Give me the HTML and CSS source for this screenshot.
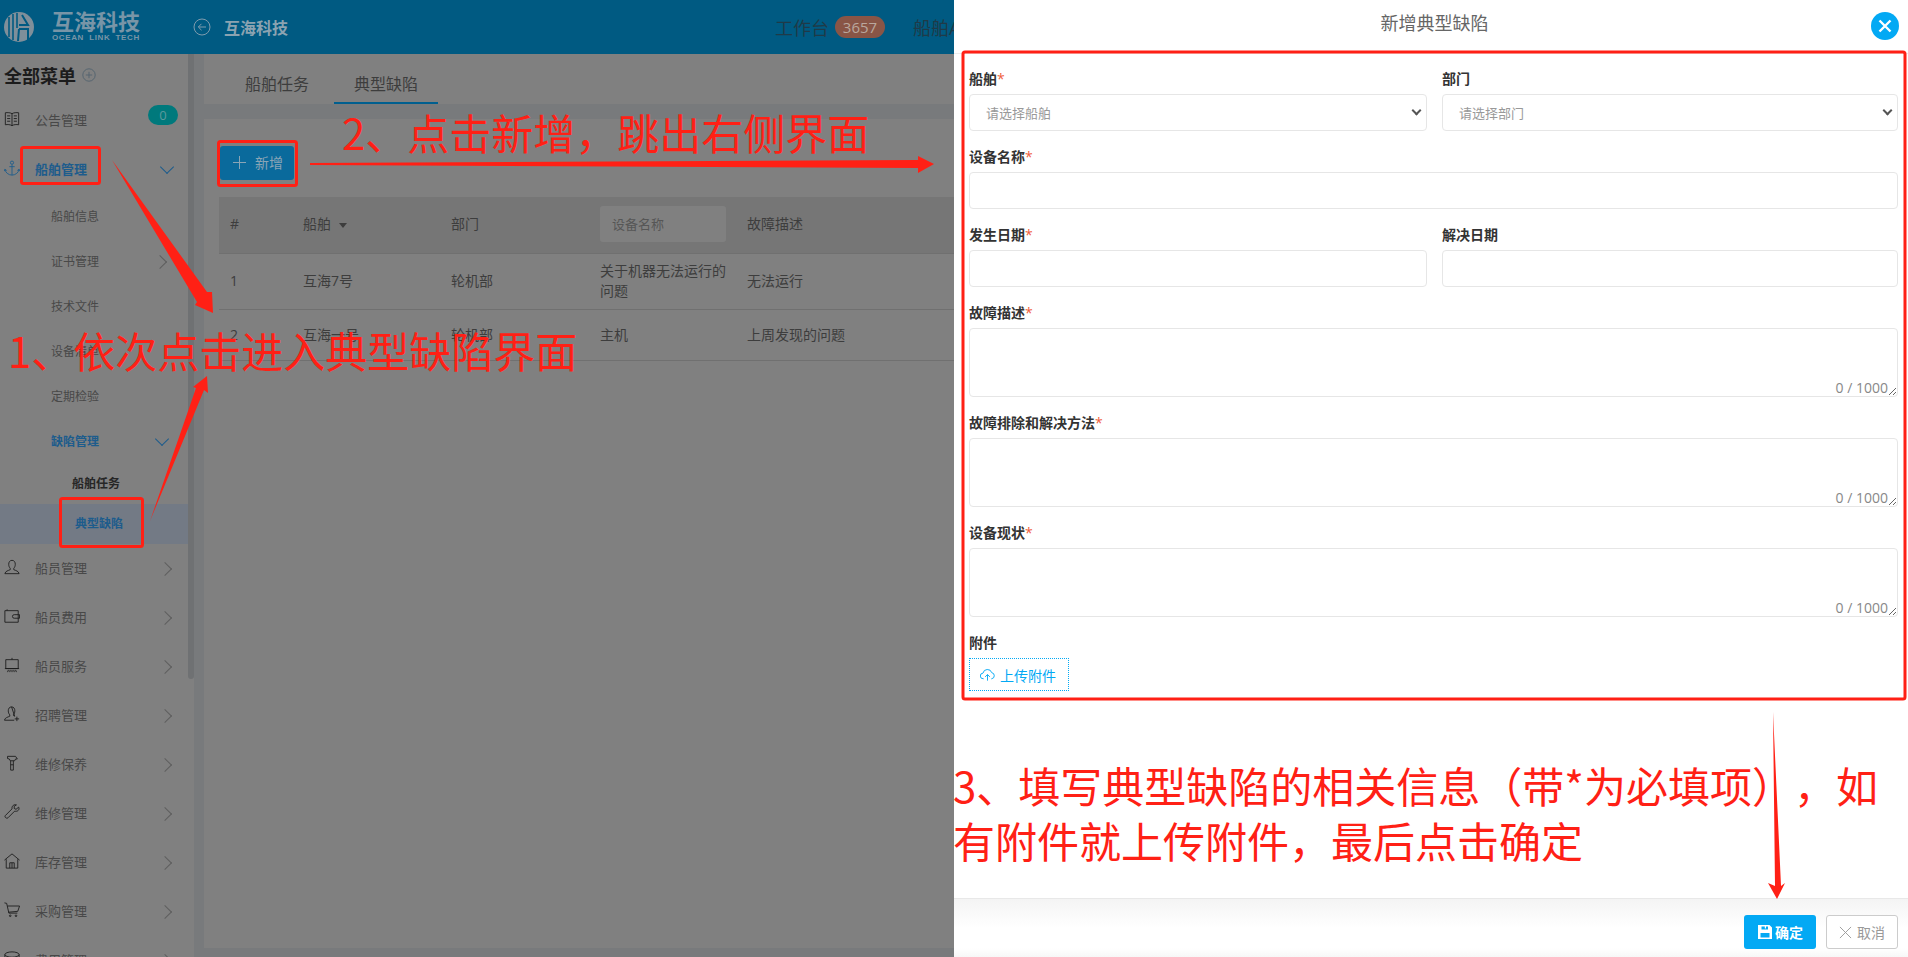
FILE: index.html
```html
<!DOCTYPE html>
<html>
  <head>
    <meta name="viewport" content="width=device-width, initial-scale=1.0">
    <title>互海科技</title>
    <link rel="stylesheet" href="styles.css">
  </head>
  <body>
    <!-- Dimmed application behind the drawer -->
    <div class="app">
      <div class="header">
        <svg class="logo" viewBox="0 0 30 30">
          <circle cx="15" cy="15" r="15" fill="#7f8f9a"/>
          <path d="M5 5v20M9 2v26M13 1v15" stroke="#005a82" stroke-width="1.600" fill="none"/>
          <path d="M15 13h9l-6 -10M15 17l-1 12M15 17h9v11" stroke="#005a82" stroke-width="2" fill="none"/>
        </svg>
        <div class="brand">
          <div class="brand-name">互海科技</div>
          <div class="brand-sub">OCEAN LINK TECH</div>
        </div>
        <svg class="back" viewBox="0 0 18 18">
          <circle cx="9" cy="9" r="8"/>
          <path d="M13 9H5.500M8.500 5.800 5.300 9l3.200 3.200"/>
        </svg>
        <div class="company">互海科技</div>
        <div class="nav">
          <span class="nav-item">工作台</span>
          <span class="nav-badge">3657</span>
          <span class="nav-item nav-next">船舶AIS</span>
        </div>
      </div>

      <div class="main">
        <div class="sidebar">
          <div class="menu-title">全部菜单
            <svg class="menu-plus" viewBox="0 0 14 14"><circle cx="7" cy="7" r="6.200"/><path d="M7 3.800v6.400M3.800 7h6.400"/></svg>
          </div>
          <div class="item">
            <svg class="ico" viewBox="0 0 18 18"><path d="M9 3C7 1.800 4 1.600 1.500 2V15.500C4 15 7 15.200 9 16.500 11 15.200 14 15 16.500 15.500V2C14 1.600 11 1.800 9 3V16.500M3.500 5.500h3.500M3.500 8.500h3.500M3.500 11.500h3.500M11 5.500h3.500M11 8.500h3.500M11 11.500h3.500"/></svg>
            <span>公告管理</span>
            <span class="count">0</span>
          </div>
          <div class="item item-open">
            <svg class="ico ico-blue" viewBox="0 0 18 18"><circle cx="9" cy="3" r="1.800"/><path d="M9 5v12M6 7.500h6M1 10.500C1.500 14 5 17 9 17s7.500-3 8-6.500M1 10.500l-.5 2M1 10.500l2 1.300M17 10.500l.5 2M17 10.500l-2 1.300"/></svg>
            <span>船舶管理</span>
            <i class="chev chev-down"></i>
          </div>
          <div class="sub">船舶信息</div>
          <div class="sub">证书管理<i class="chev chev-sub"></i></div>
          <div class="sub">技术文件</div>
          <div class="sub">设备清单</div>
          <div class="sub">定期检验</div>
          <div class="sub sub-open">缺陷管理<i class="chev chev-down chev-sub"></i></div>
          <div class="leaf">船舶任务</div>
          <div class="leaf leaf-active">典型缺陷</div>
          <div class="item">
            <svg class="ico" viewBox="0 0 18 18"><path d="M9 1.500C6.500 1.500 5.300 3.500 5.300 6c0 2 .8 3.500 1.700 4.500V12C5 13 1.500 13.500 1 16.500h16C16.500 13.500 13 13 11 12v-1.500c.9-1 1.700-2.500 1.700-4.500 0-2.500-1.200-4.500-3.700-4.500Z"/></svg>
            <span>船员管理</span>
            <i class="chev"></i>
          </div>
          <div class="item">
            <svg class="ico" viewBox="0 0 18 18"><path d="M1 3h15v13H1ZM16 7.500h-4.500a2 2 0 0 0 0 4H17.500V7.500H16M3.500 3V1.500"/></svg>
            <span>船员费用</span>
            <i class="chev"></i>
          </div>
          <div class="item">
            <svg class="ico" viewBox="0 0 18 18"><path d="M2 3h14v10H2ZM1 13h16M9 3V1M5 14.500 4 17M9 14.500V17M13 14.500l1 2.500M7 14.500 6.500 17M11 14.500l.5 2.500"/></svg>
            <span>船员服务</span>
            <i class="chev"></i>
          </div>
          <div class="item">
            <svg class="ico" viewBox="0 0 18 18"><path d="M8.500 1C6 1 4.800 3 4.800 5.500c0 2 .8 3.500 1.700 4.500v1.500C4.500 12.500 1 13 .5 16h11M12 11.500c-.7-.2-1.500-.6-1.500-1.500 .9-1 1.700-2.500 1.700-4.500C12.200 3 11 1 8.500 1ZM14.500 12v5M12 14.500h5"/></svg>
            <span>招聘管理</span>
            <i class="chev"></i>
          </div>
          <div class="item">
            <svg class="ico" viewBox="0 0 18 18"><path d="M4 1.500h9l2 3H13l-1 2H7L6 4.500 4 4ZM7.500 6.500V17h3V6.500M7.500 11h3"/></svg>
            <span>维修保养</span>
            <i class="chev"></i>
          </div>
          <div class="item">
            <svg class="ico" viewBox="0 0 18 18"><path d="M16.500 3.500 13.500 6 11.500 5 11.500 2.500 14 1C11.500 0 8.500 2 9 5.500L1.500 13c-1.500 1.500 1.500 4 3 2.500L12 8c3 1 6-1.500 4.500-4.500Z"/></svg>
            <span>维修管理</span>
            <i class="chev"></i>
          </div>
          <div class="item">
            <svg class="ico" viewBox="0 0 18 18"><path d="M.5 8 9 1l8.500 7M2.500 7v10h13V7M6.500 17v-6h5v6M9 11v6"/></svg>
            <span>库存管理</span>
            <i class="chev"></i>
          </div>
          <div class="item">
            <svg class="ico" viewBox="0 0 18 18"><path d="M.5 1 3 1.500 5.500 12.500h9.500M4 4.500h13.500L15.500 10.500l-10.500 1"/><circle cx="7" cy="15.500" r=".9"/><circle cx="13.500" cy="15.500" r=".9"/></svg>
            <span>采购管理</span>
            <i class="chev"></i>
          </div>
          <div class="item">
            <svg class="ico" viewBox="0 0 18 18"><ellipse cx="9" cy="4" rx="8" ry="3"/><path d="M1 4v10c0 1.500 3.500 3 8 3s8-1.500 8-3V4"/></svg>
            <span>费用管理</span>
            <i class="chev"></i>
          </div>
        </div>
        <div class="scrollbar"><div class="thumb"></div></div>

        <div class="content">
          <div class="tabs">
            <div class="tab">船舶任务</div>
            <div class="tab tab-active">典型缺陷</div>
          </div>
          <div class="card">
            <div class="add">
              <svg class="add-plus" viewBox="0 0 13 13"><path d="M6.500 0v13M0 6.500h13"/></svg>
              新增
            </div>
            <table class="grid">
              <colgroup>
                <col class="c1"><col class="c2"><col class="c3"><col class="c4"><col class="c5">
              </colgroup>
              <tr class="grid-head">
                <th>#</th>
                <th>船舶<i class="caret"></i></th>
                <th>部门</th>
                <th><input class="grid-input" placeholder="设备名称"></th>
                <th>故障描述</th>
              </tr>
              <tr>
                <td>1</td><td>互海7号</td><td>轮机部</td><td>关于机器无法运行的问题</td><td>无法运行</td>
              </tr>
              <tr class="row-low">
                <td>2</td><td>互海一号</td><td>轮机部</td><td>主机</td><td>上周发现的问题</td>
              </tr>
            </table>
          </div>
        </div>
      </div>
    </div>

    <!-- Drawer -->
    <div class="drawer">
      <div class="drawer-head">新增典型缺陷
        <svg class="close" viewBox="0 0 28 28"><circle cx="14" cy="14" r="14"/><path d="M8.500 8.500l11 11M19.500 8.500l-11 11"/></svg>
      </div>
      <div class="form">
        <div class="field">
          <label>船舶<b>*</b></label>
          <div class="pick"><select><option>请选择船舶</option></select></div>
        </div>
        <div class="field">
          <label>部门</label>
          <div class="pick"><select><option>请选择部门</option></select></div>
        </div>
        <div class="field wide">
          <label>设备名称<b>*</b></label>
          <input>
        </div>
        <div class="field">
          <label>发生日期<b>*</b></label>
          <input>
        </div>
        <div class="field">
          <label>解决日期</label>
          <input>
        </div>
        <div class="field wide">
          <label>故障描述<b>*</b></label>
          <div class="area"><textarea></textarea><span class="counter">0 / 1000</span></div>
        </div>
        <div class="field wide">
          <label>故障排除和解决方法<b>*</b></label>
          <div class="area"><textarea></textarea><span class="counter">0 / 1000</span></div>
        </div>
        <div class="field wide">
          <label>设备现状<b>*</b></label>
          <div class="area"><textarea></textarea><span class="counter">0 / 1000</span></div>
        </div>
        <div class="field wide">
          <label>附件</label>
          <div class="upload">
            <svg viewBox="0 0 16 14"><path d="M4 11H3.500a3 3 0 0 1-.3-6A4.800 4.800 0 0 1 12.500 4.500 3.300 3.300 0 0 1 12.500 11H12M8 13V6.500M5.500 9 8 6.500 10.500 9"/></svg>
            上传附件
          </div>
        </div>
      </div>
      <div class="drawer-foot">
        <div class="btn btn-ok">
          <svg viewBox="0 0 16 16"><path fill-rule="evenodd" d="M1 1h11.500L15 3.500V15H1ZM4.500 2.500v3h6.500v-3h-2v2h-1.200v-2ZM3.500 9v4.500h9V9Z"/></svg>
          确定
        </div>
        <div class="btn btn-cancel">
          <svg viewBox="0 0 14 14"><path d="M1 1l12 12M13 1 1 13"/></svg>
          取消
        </div>
      </div>
    </div>

    <!-- Red annotations drawn on top of the screenshot -->
    <svg class="marks" viewBox="0 0 1908 957">
      <rect x="21.500" y="147.500" width="78" height="36" rx="2"/>
      <rect x="60.500" y="498.500" width="82" height="48" rx="2"/>
      <rect x="218.500" y="141.500" width="78" height="44" rx="2"/>
      <rect x="963" y="52" width="942" height="647" rx="2"/>
      <path class="arrow" d="M112 160 207 292 212 292 213 313 195 305 197 302Z"/>
      <path class="arrow" d="M150 521 196 388 193 387 207 376 208 393 204 390Z"/>
      <path class="arrow" d="M310 163 918 160V156L934 164 918 173V168L310 165Z"/>
      <path class="arrow" d="M1773 712 1775 886 1768 883 1777 899 1785 883 1781 886Z"/>
    </svg>
    <div class="note note-1">1、依次点击进入典型缺陷界面</div>
    <div class="note note-2">2、点击新增，跳出右侧界面</div>
    <div class="note note-3">3、填写典型缺陷的相关信息（带*为必填项），如<br>有附件就上传附件，最后点击确定</div>
  </body>
</html>
```

FILE: styles.css
```css
body {
  margin: 0px;
  height: 957px;
  overflow: hidden;
  position: relative;
  font-family: "Open Sans", "Noto Sans CJK SC", sans-serif;
  font-size: 14px;
  background-color: #808080;
}

.app {
  height: 957px;
  width: 954px;
  overflow: hidden;
}

/* Header */

.header {
  display: flex;
  align-items: center;
  height: 54px;
  background-color: #005a82;
  white-space: nowrap;
}

.header > * {
  flex-shrink: 0;
}

.logo {
  width: 30px;
  height: 30px;
  margin-left: 4px;
}

.brand {
  margin-left: 18px;
  width: 87px;
  color: #7895a7;
}

.brand-name {
  font-size: 22px;
  font-weight: bold;
  line-height: 24px;
  margin-top: -2px;
}

.brand-sub {
  font-family: "Liberation Sans", sans-serif;
  font-size: 8px;
  font-weight: bold;
  line-height: 10px;
  letter-spacing: 0.600px;
  word-spacing: 2.500px;
}

.back {
  width: 18px;
  height: 18px;
  margin-left: 54px;
  fill: none;
  stroke: #7f9cae;
  stroke-width: 1;
}

.company {
  margin-left: 13px;
  font-size: 16px;
  font-weight: bold;
  color: #8ba3b1;
}

.nav {
  display: flex;
  align-items: center;
  margin-left: 487px;
}

.nav-item {
  font-size: 18px;
  color: #1f3a48;
}

.nav-next {
  margin-left: 28px;
}

.nav-badge {
  margin-left: 6px;
  width: 50px;
  height: 22px;
  line-height: 22px;
  border-radius: 11px;
  background-color: #895546;
  color: #b9a79d;
  font-size: 15px;
  text-align: center;
}

/* Sidebar */

.main {
  display: flex;
  height: 903px;
}

.sidebar {
  width: 188px;
  flex-shrink: 0;
  overflow: hidden;
  color: #484848;
  font-size: 13px;
}

.menu-title {
  display: flex;
  align-items: center;
  height: 42px;
  padding-left: 4px;
  font-size: 18px;
  font-weight: bold;
  color: #1c1c1c;
}

.menu-plus {
  width: 14px;
  height: 14px;
  margin-left: 6px;
  fill: none;
  stroke: #566570;
  stroke-width: 1;
}

.item {
  display: flex;
  align-items: center;
  box-sizing: border-box;
  height: 49px;
  padding: 0px 0px 3px 4px;
  position: relative;
}

.item span:first-of-type {
  margin-left: 15px;
}

.ico {
  width: 16px;
  height: 16px;
  flex-shrink: 0;
  fill: none;
  stroke: #1c1c1c;
  stroke-width: 1;
}

.ico-blue {
  stroke: #1d5c8c;
}

.item-open,
.sub-open {
  color: #1d5c8c;
  font-weight: bold;
}

.count {
  position: absolute;
  left: 148px;
  top: 9px;
  width: 30px;
  height: 20px;
  line-height: 20px;
  border-radius: 10px;
  background-color: #00797c;
  color: #5b9a9c;
  font-size: 13px;
  text-align: center;
}

.chev {
  position: absolute;
  left: 160px;
  top: 50%;
  width: 9px;
  height: 9px;
  margin-top: -5px;
  border-top: 1px solid #5e5e5e;
  border-right: 1px solid #5e5e5e;
  transform: rotate(45deg);
}

.chev-down {
  left: 162px;
  margin-top: -8px;
  border-color: #1d5c8c;
  transform: rotate(135deg);
}

.sub {
  position: relative;
  height: 45px;
  line-height: 45px;
  padding-left: 51px;
  font-size: 12px;
}

.chev-sub {
  left: 155px;
}

.chev-down.chev-sub {
  left: 157px;
}

.leaf {
  height: 40px;
  line-height: 40px;
  padding-left: 72px;
  font-size: 12px;
  font-weight: bold;
  color: #262626;
}

.leaf-active {
  padding-left: 75px;
  background-color: #737a85;
  color: #1d5c8c;
}

.scrollbar {
  width: 6px;
  flex-shrink: 0;
}

.thumb {
  height: 625px;
  background-color: #6f7173;
  border-radius: 0px 0px 3px 3px;
}

/* Page content */

.content {
  flex-grow: 1;
  margin-left: 10px;
  position: relative;
  box-shadow: -10px 0px 0px #787a7c;
  background-color: #787a7c;
  padding-bottom: 9px;
  display: flex;
  flex-direction: column;
}

.tabs {
  display: flex;
  height: 50px;
  padding-left: 21px;
  background-color: #808080;
}

.tab {
  padding: 0px 20px;
  width: 64px;
  line-height: 60px;
  margin-right: 5px;
  font-size: 16px;
  color: #3d3d3d;
}

.tab-active {
  height: 48px;
  border-bottom: 2px solid #005f8f;
}

.card {
  flex-grow: 1;
  margin-top: 15px;
  padding: 27px 0px 0px 15px;
  background-color: #808080;
}

.add {
  display: flex;
  align-items: center;
  width: 74px;
  height: 34px;
  margin-left: 1px;
  padding-bottom: 2px;
  box-sizing: border-box;
  border-radius: 3px;
  background-color: #0a6a9c;
  color: #8aa5b6;
  font-size: 14px;
}

.add-plus {
  width: 13px;
  height: 13px;
  margin-left: 13px;
  margin-right: 9px;
  stroke: #8aa5b6;
  stroke-width: 1;
}

.grid {
  width: 735px;
  margin-top: 17px;
  border-collapse: collapse;
  table-layout: fixed;
  color: #3d3d3d;
}

.c1 { width: 73px; }
.c2 { width: 148px; }
.c3 { width: 149px; }
.c4 { width: 147px; }

.grid th,
.grid td {
  padding: 0px 10px 0px 11px;
  text-align: left;
  font-weight: normal;
  line-height: 20px;
}

.grid th {
  padding-bottom: 2px;
}

.grid-head {
  height: 56px;
  background-color: #767676;
}

.grid tr {
  height: 56px;
  border-bottom: 1px solid #707070;
}

.grid tr.row-low {
  height: 51px;
}

.caret {
  display: inline-block;
  margin-left: 8px;
  vertical-align: middle;
  border-left: 4px solid transparent;
  border-right: 4px solid transparent;
  border-top: 5px solid #3d3d3d;
}

.grid-input {
  display: block;
  box-sizing: border-box;
  width: 126px;
  height: 36px;
  padding: 0px 12px;
  border: none;
  border-radius: 3px;
  background-color: #808080;
  font: 13px "Noto Sans CJK SC", sans-serif;
}

.grid-input::placeholder {
  color: #565656;
}

/* Drawer */

.drawer {
  position: absolute;
  left: 954px;
  top: 0px;
  width: 954px;
  height: 957px;
  display: flex;
  flex-direction: column;
  background-color: white;
}

.drawer-head {
  position: relative;
  box-sizing: border-box;
  height: 54px;
  padding-left: 7px;
  line-height: 46px;
  flex-shrink: 0;
  border-bottom: 1px solid #eeeeee;
  font-size: 18px;
  color: #666666;
  text-align: center;
}

.close {
  position: absolute;
  right: 9px;
  top: 12px;
  width: 28px;
  height: 28px;
  fill: #03a9f4;
  stroke: white;
  stroke-width: 2.400;
}

.close circle {
  stroke: none;
}

.form {
  display: grid;
  grid-template-columns: 458px 456px;
  column-gap: 15px;
  row-gap: 13px;
  padding: 12px 10px 0px 15px;
}

.field label {
  display: block;
  height: 26px;
  line-height: 25px;
  margin-bottom: 2px;
  font-size: 14px;
  font-weight: bold;
  color: #333333;
}

.field b {
  font-weight: normal;
  color: #f0603c;
}

.wide {
  grid-column: 1 / 3;
}

.field input,
.field select,
.field textarea {
  display: block;
  box-sizing: border-box;
  width: 100%;
  height: 37px;
  padding: 0px 12px;
  border: 1px solid #e6e6e6;
  border-radius: 4px;
  background-color: white;
  font: 13px "Noto Sans CJK SC", sans-serif;
  color: #999999;
}

.field select {
  padding-left: 16px;
  appearance: none;
}

.pick {
  position: relative;
}

.pick::after {
  content: "";
  position: absolute;
  right: 7px;
  top: 13px;
  width: 5px;
  height: 5px;
  border-right: 2px solid #555555;
  border-bottom: 2px solid #555555;
  transform: rotate(45deg);
}

.area {
  position: relative;
}

.field textarea {
  height: 69px;
  padding-top: 8px;
  resize: vertical;
}

.counter {
  position: absolute;
  right: 10px;
  bottom: 0px;
  line-height: 18px;
  font-size: 14px;
  color: #888888;
}

.upload {
  display: flex;
  align-items: center;
  box-sizing: border-box;
  width: 100px;
  height: 33px;
  padding-left: 10px;
  border: 1px dotted #03a9f4;
  color: #03a9f4;
  font-size: 14px;
}

.upload svg {
  width: 15px;
  height: 14px;
  margin-right: 5px;
  fill: none;
  stroke: #03a9f4;
  stroke-width: 1;
}

.drawer-foot {
  display: flex;
  justify-content: flex-end;
  gap: 10px;
  box-sizing: border-box;
  height: 59px;
  margin-top: auto;
  padding: 16px 10px 0px 0px;
  border-top: 1px solid #e8e8e8;
  background: linear-gradient(#f4f4f4, white 50%, white 85%, #f7f7f7);
}

.btn {
  display: flex;
  align-items: center;
  justify-content: center;
  box-sizing: border-box;
  width: 72px;
  height: 34px;
  border-radius: 3px;
  font-size: 14px;
}

.btn-ok {
  background-color: #03a9f4;
  color: white;
  font-weight: bold;
}

.btn-ok svg {
  width: 16px;
  height: 16px;
  margin-right: 2px;
  fill: white;
}

.btn-cancel {
  border: 1px solid #cccccc;
  background-color: white;
  color: #999999;
}

.btn-cancel svg {
  width: 13px;
  height: 13px;
  margin-right: 5px;
  fill: none;
  stroke: #999999;
  stroke-width: 1;
}

/* Annotations */

.marks {
  position: absolute;
  left: 0px;
  top: 0px;
  width: 1908px;
  height: 957px;
}

.marks rect {
  fill: none;
  stroke: #ff2015;
  stroke-width: 3;
}

.marks .arrow {
  fill: #ff2015;
}

.note {
  position: absolute;
  color: #ff2015;
  font-family: "Noto Sans CJK SC", sans-serif;
  font-size: 42px;
  line-height: 55px;
  white-space: nowrap;
  text-spacing-trim: space-all;
}

.note-1 { left: 8px; top: 322px; }
.note-2 { left: 342px; top: 104px; }
.note-3 { left: 953px; top: 757px; }
```
